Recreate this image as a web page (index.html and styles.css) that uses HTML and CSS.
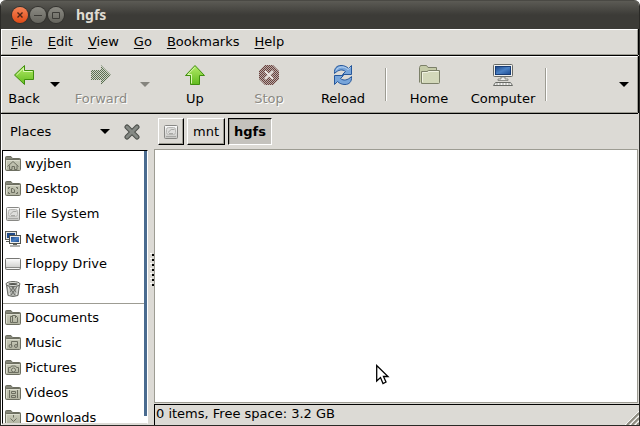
FILE: index.html
```html
<!DOCTYPE html>
<html lang="en">
<head>
    <meta charset="UTF-8">
    <meta name="viewport" content="width=device-width, initial-scale=1.0">
    <title>hgfs</title>
    <link rel="stylesheet" href="styles.css">
</head>
<body>
    <svg class="defs" aria-hidden="true">
        <defs>
            <linearGradient id="green" x1="0" y1="0" x2="0" y2="1">
                <stop offset="0" stop-color="#b4ec68"/>
                <stop offset="1" stop-color="#62bb1e"/>
            </linearGradient>
            <linearGradient id="screen" x1="0" y1="0" x2="1" y2="1">
                <stop offset="0" stop-color="#1b4586"/>
                <stop offset="0.5" stop-color="#4a80c4"/>
                <stop offset="1" stop-color="#1d4c92"/>
            </linearGradient>
            <linearGradient id="metal" x1="0" y1="0" x2="0" y2="1">
                <stop offset="0" stop-color="#fdfdfd"/>
                <stop offset="1" stop-color="#c6c6c3"/>
            </linearGradient>
            <linearGradient id="olive" x1="0" y1="0" x2="0" y2="1">
                <stop offset="0" stop-color="#c9cbb9"/>
                <stop offset="1" stop-color="#b1b3a1"/>
            </linearGradient>
            <pattern id="dither-green" width="2" height="2" patternUnits="userSpaceOnUse">
                <path fill="#5b6f50" d="M0 0h1v1H0zM1 1h1v1H1z"/>
                <path fill="#cfd3c8" d="M1 0h1v1H1zM0 1h1v1H0z"/>
            </pattern>
            <pattern id="dither-red" width="2" height="2" patternUnits="userSpaceOnUse">
                <path fill="#6e3f3b" d="M0 0h1v1H0zM1 1h1v1H1z"/>
                <path fill="#b5aeaa" d="M1 0h1v1H1zM0 1h1v1H0z"/>
            </pattern>
            <symbol id="folder" viewBox="0 0 16 16">
                <path fill="#85877a" stroke="#6d6f61" d="M.5 13V1.500Q.5 .5 1.500 .5H6L7.500 2.500H14.500Q15.500 2.500 15.500 3.500V8H.5z"/>
                <rect x=".5" y="3.500" width="15" height="11" rx="1" fill="url(#olive)" stroke="#6d6f61"/>
                <path fill="none" stroke="#dcddcf" d="M1.500 13V4.500H14.500"/>
            </symbol>
            <symbol id="disk" viewBox="0 0 16 16">
                <rect x="1.500" y="1.500" width="13" height="13" rx="1" fill="url(#metal)" stroke="#888885"/>
                <rect x="3.500" y="3.500" width="9" height="7" rx="2" fill="#dededc" stroke="#b8b8b5"/>
                <path fill="none" stroke="#a8a8a5" d="M5 8.500Q8 4 11.500 5.500M6 9.500H10"/>
                <path stroke="#a7a7a4" d="M3 12.500H13"/>
            </symbol>
        </defs>
    </svg>

    <div class="window">
        <header class="titlebar">
            <div class="controls">
                <button class="control close" aria-label="Close">
                    <svg width="16" height="16" viewBox="0 0 16 16"><path d="M5.500 5.500L10.500 10.500M10.500 5.500L5.500 10.500" fill="none" stroke="#4b2517" stroke-width="1.400"/></svg>
                </button>
                <button class="control" aria-label="Minimize">
                    <svg width="16" height="16" viewBox="0 0 16 16"><path d="M4 8.500H12" fill="none" stroke="#3c3b37"/></svg>
                </button>
                <button class="control" aria-label="Maximize">
                    <svg width="16" height="16" viewBox="0 0 16 16"><path d="M4.500 5.500H11.500V11.500H4.500z" fill="none" stroke="#3c3b37"/></svg>
                </button>
            </div>
            <h1>hgfs</h1>
        </header>

        <nav class="menubar">
            <button><u>F</u>ile</button>
            <button><u>E</u>dit</button>
            <button><u>V</u>iew</button>
            <button><u>G</u>o</button>
            <button><u>B</u>ookmarks</button>
            <button><u>H</u>elp</button>
        </nav>

        <div class="toolbar">
            <button class="tool narrow">
                <svg width="24" height="24" viewBox="0 0 24 24"><path d="M2.500 12L12.500 2.500V7.500H21.500V16.500H12.500V21.500z" fill="url(#green)" stroke="#3f8f0d" stroke-linejoin="round"/><path d="M4.500 12L11.500 5.200V8.500H20.500" fill="none" stroke="#dcf8b4"/></svg>
                Back
            </button>
            <button class="drop" aria-label="Back history"><span class="arrow"></span></button>
            <button class="tool medium" disabled>
                <svg width="24" height="24" viewBox="0 0 24 24"><path d="M22 12L12 2V7H2V17H12V22z" fill="url(#dither-green)"/></svg>
                Forward
            </button>
            <button class="drop" aria-label="Forward history" disabled><span class="arrow"></span></button>
            <button class="tool">
                <svg width="24" height="24" viewBox="0 0 24 24"><path d="M12 2.500L21.500 12.500H16.500V21.500H7.500V12.500H2.500z" fill="url(#green)" stroke="#3f8f0d" stroke-linejoin="round"/><path d="M12 4.200L4.800 11.500H8.500V20.500" fill="none" stroke="#dcf8b4"/></svg>
                Up
            </button>
            <button class="tool" disabled>
                <svg width="24" height="24" viewBox="0 0 24 24"><path d="M8 2H16L22 8V16L16 22H8L2 16V8z" fill="url(#dither-red)"/><path d="M8 8L16 16M16 8L8 16" stroke="#e9e4e0" stroke-width="2"/></svg>
                Stop
            </button>
            <button class="tool">
                <svg width="24" height="24" viewBox="0 0 24 24">
                    <path id="swirl" d="M3.500 10.500C3 5 6 2.500 10 2.500C13 2.500 15.500 3.500 17.500 5.500L20.500 2.500V11.500H11.500L14.500 8.500C11.500 6 7.500 6.500 3.500 10.500z" fill="#78a5da" stroke="#26579b" stroke-linejoin="round"/>
                    <use href="#swirl" transform="rotate(180 12 12)"/>
                    <path d="M5 7.500C7 3.500 13 2.500 17 6.500L19.500 4.500" fill="none" stroke="#bcd5f2"/>
                </svg>
                Reload
            </button>
            <span class="divider"></span>
            <button class="tool">
                <svg width="24" height="24" viewBox="0 0 24 24">
                    <path d="M2.500 19.500V4.500L3.500 2.500H9.500L11 4.500H19.500V17" fill="#c5cba8" stroke="#7c8069"/>
                    <path d="M4.500 8.500H10L11.500 7.500H22.500V19.500Q22.500 20.500 21.500 20.500H4.500z" fill="#d3d8ba" stroke="#7c8069"/>
                    <path d="M5.500 19V9.500H10.500L12 8.500H21.500" fill="none" stroke="#f0f2e1"/>
                </svg>
                Home
            </button>
            <button class="tool">
                <svg width="24" height="24" viewBox="0 0 24 24">
                    <rect x="2.500" y="1.500" width="19" height="12" rx="1" fill="#f0f0ee" stroke="#696b66"/>
                    <rect x="4.500" y="3.500" width="15" height="8" fill="url(#screen)" stroke="#173c76"/>
                    <path d="M10 14H14V16H17V17.500H7V16H10z" fill="#ededeb" stroke="#777974" stroke-width=".8"/>
                    <path d="M4.500 19.500H19.500L21.500 22.500H2.500z" fill="#f4f4f2" stroke="#696b66"/>
                    <path d="M5 21H19" stroke="#9d9d99" stroke-dasharray="2 1"/>
                </svg>
                Computer
            </button>
            <span class="divider"></span>
            <button class="drop overflow" aria-label="More tools"><span class="arrow"></span></button>
        </div>

        <main class="content">
            <aside class="sidebar">
                <div class="side-header">
                    <div class="side-select">
                        <select aria-label="Side pane">
                            <option>Places</option>
                        </select>
                        <span class="arrow"></span>
                    </div>
                    <button class="side-close" aria-label="Close side pane">
                        <svg width="16" height="16" viewBox="0 0 16 16"><path d="M3 3L13 13M13 3L3 13" stroke="#4c4f4a" stroke-width="5" stroke-linecap="round"/><path d="M3 3L13 13M13 3L3 13" stroke="#858984" stroke-width="3" stroke-linecap="round"/></svg>
                    </button>
                </div>
                <div class="places">
                    <ul>
                        <li><a href="#"><svg width="16" height="16" viewBox="0 0 16 16"><use href="#folder"/><path d="M2.500 10.500L8 5.500L13.500 10.500M4.500 9.500V13.500H7V10.500H9.500V13.500H12V9.500" fill="none" stroke="#6d6f61"/></svg>wyjben</a></li>
                        <li><a href="#"><svg width="16" height="16" viewBox="0 0 16 16"><use href="#folder"/><path d="M3.500 8V6.500H5M11 6.500H12.500V8M3.500 11V12.500H5M11 12.500H12.500V11M6.500 7.500H8L9.500 9V11.500H6.500z" fill="none" stroke="#6d6f61"/></svg>Desktop</a></li>
                        <li><a href="#"><svg width="16" height="16"><use href="#disk"/></svg>File System</a></li>
                        <li><a href="#"><svg width="16" height="16" viewBox="0 0 16 16"><rect x=".5" y=".5" width="11" height="8" fill="#e6e6e3" stroke="#60625d"/><rect x="2" y="2" width="8" height="5" fill="#204a87"/><path d="M1 10.500H5" stroke="#60625d"/><rect x="4.500" y="4.500" width="11" height="8" fill="#eeeeec" stroke="#50524d"/><rect x="6" y="6" width="8" height="5" fill="url(#screen)"/><path d="M8 13.500H12M5 15H15" stroke="#60625d"/></svg>Network</a></li>
                        <li><a href="#"><svg width="16" height="16" viewBox="0 0 16 16"><rect x=".5" y="2.500" width="15" height="11" rx="1" fill="url(#metal)" stroke="#777774"/><path d="M1 11.500H15" stroke="#8b8b88"/><path d="M2 12.500H14" stroke="#f5f5f3"/></svg>Floppy Drive</a></li>
                        <li><a href="#"><svg width="16" height="16" viewBox="0 0 16 16"><path d="M1.500 4L3 14.500Q8 16.500 13 14.500L14.500 4z" fill="#b5b7b2" stroke="#6b6d68"/><path d="M4 6L10 14M7 6L12 12M12 6L6 14M9 6L4 12" stroke="#6a6c67"/><path d="M3.500 6L4.500 14M12.500 6L11.500 14" stroke="#e3e4e0"/><ellipse cx="8" cy="3" rx="7" ry="2.500" fill="#dedfdb" stroke="#666863"/><ellipse cx="8" cy="3" rx="4.500" ry="1" fill="#555752"/></svg>Trash</a></li>
                    </ul>
                    <hr>
                    <ul>
                        <li><a href="#"><svg width="16" height="16" viewBox="0 0 16 16"><use href="#folder"/><path d="M7.500 12.500H5.500V6.500H7M7.500 5.500H10.500L12.500 7.500V12.500H7.500V5.500M10.500 6V8" fill="none" stroke="#6d6f61"/></svg>Documents</a></li>
                        <li><a href="#"><svg width="16" height="16" viewBox="0 0 16 16"><use href="#folder"/><path d="M6.500 11V6.500H12.500V10.500" fill="none" stroke="#6d6f61"/><circle cx="5.500" cy="11" r="1.500" fill="none" stroke="#6d6f61"/><circle cx="11" cy="11" r="1.500" fill="none" stroke="#6d6f61"/></svg>Music</a></li>
                        <li><a href="#"><svg width="16" height="16" viewBox="0 0 16 16"><use href="#folder"/><path d="M3.500 7.500H5.500L6.500 6H10.500L11.500 7.500H13.500V12.500H3.500z" fill="none" stroke="#6d6f61"/><circle cx="8.500" cy="10" r="2" fill="#c9cbb9" stroke="#6d6f61"/></svg>Pictures</a></li>
                        <li><a href="#"><svg width="16" height="16" viewBox="0 0 16 16"><use href="#folder"/><path d="M4.500 5V13M12.500 5V13M6.500 6.500H10.500V8.500H6.500zM6.500 10.500H10.500V12.500H6.500z" fill="none" stroke="#6d6f61"/></svg>Videos</a></li>
                        <li><a href="#"><svg width="16" height="16" viewBox="0 0 16 16"><use href="#folder"/><path d="M8.500 5V7.500M5.500 8.500L8.500 11.500L11.500 8.500" fill="none" stroke="#6d6f61"/></svg>Downloads</a></li>
                    </ul>
                </div>
            </aside>

            <div class="splitter"><span class="grip"></span></div>

            <section class="main-pane">
                <div class="pathbar">
                    <button aria-label="File System"><svg width="16" height="16"><use href="#disk"/></svg></button>
                    <button class="folder">mnt</button>
                    <button class="folder current">hgfs</button>
                </div>
                <div class="files"></div>
                <footer class="statusbar">
                    <span>0 items, Free space: 3.2 GB</span>
                    <svg class="resize" width="14" height="14" viewBox="0 0 14 14"><path d="M0 14L14 0M5 14L14 5M10 14L14 10" stroke="#fff"/><path d="M2 14L14 2M7 14L14 7M12 14L14 12" stroke="#8d8b80" stroke-width="2"/></svg>
                </footer>
            </section>
        </main>
    </div>

    <svg class="pointer" width="14" height="21" viewBox="0 0 14 21" aria-hidden="true"><path d="M.7 1.500V17L4.500 13.500L7 19.500L10 18L7.500 12.500H12z" fill="#fff" stroke="#000" stroke-width="1.300"/></svg>
</body>
</html>
```
FILE: styles.css
```css
* {
    box-sizing: border-box;
}

body {
    margin: 0;
    background: #fff;
    font-family: "DejaVu Sans", sans-serif;
    font-size: 13px;
    line-height: 16px;
    color: #000;
}

button,
select {
    margin: 0;
    padding: 0;
    border: none;
    background: none;
    font: inherit;
    color: inherit;
}

svg {
    display: block;
    flex-shrink: 0;
}

.defs {
    position: absolute;
    width: 0;
    height: 0;
}

.window {
    display: flex;
    flex-direction: column;
    height: 100vh;
    border: solid #2b2a27;
    border-width: 0 1px 1px;
    border-radius: 6px 6px 0 0;
    background: #dcdad5;
    overflow: hidden;
}

/* title bar */
.titlebar {
    display: flex;
    align-items: center;
    gap: 12px;
    height: 29px;
    flex-shrink: 0;
    padding-left: 11px;
    border-top: 1px solid #4a4944;
    background: linear-gradient(#5c5b55, #3c3b37 50%, #3c3b37);
}

.titlebar h1 {
    margin: 0;
    font-family: "Noto Sans", sans-serif;
    font-size: 14px;
    font-weight: bold;
    color: #dfdbd2;
}

.controls {
    display: flex;
    gap: 2px;
}

.control {
    width: 16px;
    height: 16px;
    border-radius: 50%;
    background: linear-gradient(#8b8a83, #65645d);
    box-shadow: 0 0 0 1px #33322e;
}

.control.close {
    background: linear-gradient(#f58457, #df4a16);
}

/* menu bar */
.menubar,
.toolbar {
    display: flex;
    flex-shrink: 0;
    border: 1px solid #fff;
    border-right-color: #9d9c93;
    border-bottom-color: #9d9c93;
    box-shadow: 0 1px #000, 1px 0 #000;
    margin: 0 1px 1px 0;
}

.menubar {
    height: 26px;
    gap: 15px;
    padding-left: 9px;
}

.menubar u {
    text-underline-offset: 2px;
    text-decoration-thickness: 1px;
}

/* tool bar */
.toolbar {
    height: 57px;
    padding-left: 2px;
}

.tool {
    display: flex;
    flex-direction: column;
    align-items: center;
    justify-content: center;
    gap: 4px;
    width: 74px;
}

.tool.narrow {
    width: 40px;
}

.tool.medium {
    width: 66px;
}

.tool:disabled {
    color: #8a8983;
    text-shadow: 1px 1px #fff;
}

.drop {
    display: flex;
    align-items: center;
    justify-content: center;
    width: 22px;
    margin-right: 2px;
}

.overflow {
    margin-left: auto;
}

.arrow {
    border: 5px solid transparent;
    border-top-color: #000;
    border-bottom: none;
    pointer-events: none;
}

.drop:disabled .arrow {
    border-top-color: #85847e;
}

.divider {
    width: 2px;
    margin: 11px 5px;
    border-left: 1px solid #9d9c93;
    border-right: 1px solid #fff;
}

/* side pane */
.content {
    display: flex;
    flex: 1;
    min-height: 0;
}

.sidebar {
    display: flex;
    flex-direction: column;
    width: 148px;
    border-left: 1px solid #fff;
}

.side-header {
    display: flex;
    align-items: center;
    height: 35px;
    flex-shrink: 0;
    padding: 0 9px 0 8px;
}

.side-select {
    display: flex;
    align-items: center;
    flex: 1;
    padding-right: 14px;
}

.side-select select {
    flex: 1;
    appearance: none;
}

.places {
    flex: 1;
    min-height: 0;
    overflow: hidden;
    margin: 1px 1px 1px 0;
    padding-right: 3px;
    border: 1px solid #000;
    border-right-color: #fff;
    border-bottom-color: #dcdad5;
    background: linear-gradient(#4a6b8f, #4a6b8f) right top / 3px calc(100% - 7px) no-repeat #fff;
}

.places ul {
    margin: 0;
    padding: 0;
    list-style: none;
}

.places a {
    display: flex;
    align-items: center;
    gap: 4px;
    height: 25px;
    padding-left: 2px;
    color: #000;
    text-decoration: none;
}

.places hr {
    margin: 2px 0 1px;
    border: none;
    border-top: 1px solid #9d9c93;
}

.splitter {
    display: flex;
    align-items: center;
    justify-content: center;
    width: 5px;
}

.grip {
    width: 4px;
    height: 34px;
    background:
        repeating-linear-gradient(#000 0 2px, transparent 2px 5px) right 0 top 1px / 2px 100% no-repeat,
        repeating-linear-gradient(#fff 0 1px, transparent 1px 5px) left top / 2px 100% no-repeat;
}

/* location and files */
.main-pane {
    display: flex;
    flex-direction: column;
    flex: 1;
    min-width: 0;
}

.pathbar {
    display: flex;
    align-items: center;
    gap: 3px;
    height: 35px;
    flex-shrink: 0;
    padding-left: 4px;
}

.pathbar button {
    height: 27px;
    padding: 0 4px;
    border: 1px solid #fff;
    border-right-color: #000;
    border-bottom-color: #000;
    box-shadow: inset -1px -1px #9d9c93;
}

.pathbar .folder {
    padding: 0 5px;
}

.pathbar .current {
    border-color: #000 #fff #fff #000;
    background: #c4c2bd;
    box-shadow: inset 1px 1px #9d9c93;
    font-weight: bold;
}

.files {
    flex: 1;
    margin-right: 1px;
    border: 1px solid #9d9c93;
    background: #fff;
}

.statusbar {
    display: flex;
    align-items: flex-start;
    justify-content: space-between;
    height: 21px;
    flex-shrink: 0;
    margin-top: 1px;
    padding: 1px 0 0 1px;
    border: solid #000;
    border-width: 1px 0 0 1px;
}

.resize {
    align-self: flex-end;
}

.pointer {
    position: absolute;
    left: 376px;
    top: 364px;
}
```
